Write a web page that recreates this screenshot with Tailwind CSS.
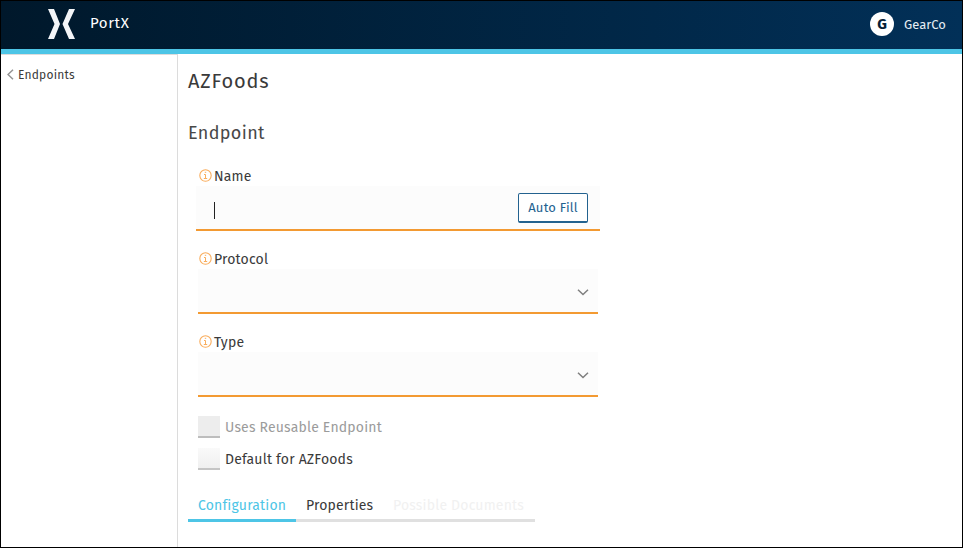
<!DOCTYPE html>
<html lang="en">
<head>
<meta charset="utf-8">
<title>PortX</title>
<script src="https://cdn.jsdelivr.net/npm/@tailwindcss/browser@4"></script>
</head>
<body class="h-[548px] w-[963px] overflow-hidden bg-white font-['Fira_Sans','Noto_Sans',sans-serif] text-sm text-[#3a3a3a]">
<div class="flex h-[548px] w-[963px] flex-col border border-black">
  <header class="flex h-[53px] shrink-0 items-start border-b-[5px] border-[#4dc5e6] bg-linear-to-r from-[#00182b] to-[#023058] text-white">
    <svg class="mt-2 ml-[46px] h-[30px] w-[28px]" viewBox="0 0 28 30" fill="#f3f5f8"><path d="M1 0h6l6 15-6 15H1l6.500-15zM28 0h-6l-6.500 15L22 30h6l-7-15z"/></svg>
    <span class="mt-3 ml-[15px] text-[15px] leading-5 tracking-[0.600px]">PortX</span>
    <span class="mt-[11px] ml-auto flex h-6 w-6 items-center justify-center rounded-full bg-white pt-px text-[15px] font-bold text-[#061f38]">G</span>
    <span class="mt-[14px] mr-4 ml-[10px] w-[42px] text-[13px] leading-5 whitespace-nowrap text-[#e5edf3]">GearCo</span>
  </header>
  <div class="flex min-h-0 flex-1">
    <aside class="w-[177px] shrink-0 border-t border-r border-[#dcdcdc] pt-[10px] pl-[6px]">
      <a class="flex h-5 items-center gap-1 text-[12px] tracking-[0.200px]"><svg class="-mt-px h-[11px] w-[7px]" viewBox="0 0 7 11" fill="none" stroke="#949494" stroke-width="1.500"><path d="M6 .7 1 5.500l5 4.800"/></svg><span class="pt-[2px]">Endpoints</span></a>
    </aside>
    <main class="flex-1 pl-[10px]">
      <h1 class="mt-[13px] h-7 text-[20px] leading-7 tracking-[0.800px]">AZFoods</h1>
      <h2 class="mt-[26px] h-6 text-[18px] leading-6 tracking-[0.350px] text-[#484848]">Endpoint</h2>
      <section class="ml-[10px] w-[400px] tracking-[0.180px]">
        <div class="mt-[21px] h-[64px]">
          <label class="flex h-5 items-center gap-[2px] pl-[1px]"><svg class="-mt-px h-[13px] w-[13px]" viewBox="0 0 13 13" fill="none" stroke="#f9ad5d"><circle cx="6.500" cy="6.500" r="5.700" stroke-width="1.100"/><path d="M5 5.500h1.500v4M4.800 9.500h3.400M5.800 3.300h1.400"/></svg><span class="pt-[2px]">Name</span></label>
          <div class="-mx-[2px] flex h-[45px] w-[404px] items-center border-b-2 border-[#f39a32] bg-[#fcfcfc]">
            <i class="mt-[5px] ml-[18px] h-[17px] w-px bg-[#222]"></i>
            <button class="mr-3 ml-auto h-[30px] w-[70px] rounded-xs border border-b-2 border-[#23628f] bg-white pt-[2px] text-[13px] tracking-[0.200px] whitespace-nowrap text-[#23628f]">Auto Fill</button>
          </div>
        </div>
        <div class="mt-[19px] h-[64px]">
          <label class="flex h-5 items-center gap-[2px] pl-[1px]"><svg class="-mt-px h-[13px] w-[13px]" viewBox="0 0 13 13" fill="none" stroke="#f9ad5d"><circle cx="6.500" cy="6.500" r="5.700" stroke-width="1.100"/><path d="M5 5.500h1.500v4M4.800 9.500h3.400M5.800 3.300h1.400"/></svg><span class="pt-[2px]">Protocol</span></label>
          <div class="flex h-[45px] items-center justify-end border-b-2 border-[#f39a32] bg-[#fcfcfc] pr-[9px]"><svg class="mt-[3px] h-[7px] w-[12px]" viewBox="0 0 12 7" fill="none" stroke="#7f7f7f" stroke-width="1.500"><path d="m1 .8 5 4.700L11 .8"/></svg></div>
        </div>
        <div class="mt-[19px] h-[64px]">
          <label class="flex h-5 items-center gap-[2px] pl-[1px]"><svg class="-mt-px h-[13px] w-[13px]" viewBox="0 0 13 13" fill="none" stroke="#f9ad5d"><circle cx="6.500" cy="6.500" r="5.700" stroke-width="1.100"/><path d="M5 5.500h1.500v4M4.800 9.500h3.400M5.800 3.300h1.400"/></svg><span class="pt-[2px]">Type</span></label>
          <div class="flex h-[45px] items-center justify-end border-b-2 border-[#f39a32] bg-[#fcfcfc] pr-[9px]"><svg class="mt-[3px] h-[7px] w-[12px]" viewBox="0 0 12 7" fill="none" stroke="#7f7f7f" stroke-width="1.500"><path d="m1 .8 5 4.700L11 .8"/></svg></div>
        </div>
        <label class="mt-5 flex h-[22px] items-center gap-[5px] text-[#9b9b9b]"><i class="h-[22px] w-[22px] border-b-2 border-[#bdbdbd] bg-[#ededed]"></i><span class="pt-[2px]">Uses Reusable Endpoint</span></label>
        <label class="mt-[10px] flex h-[22px] items-center gap-[5px]"><i class="h-[22px] w-[22px] border-b-2 border-[#c5c5c5] bg-linear-to-b from-[#fafafa] to-[#f0f0f0]"></i><span class="pt-[2px]">Default for AZFoods</span></label>
      </section>
      <nav class="mt-[23px] flex h-[29px] w-[347px] tracking-[0.180px] whitespace-nowrap">
        <a class="w-[108px] border-b-3 border-[#4dc5e6] pt-[3px] pl-[10px] text-[#4dc5e6]">Configuration</a>
        <a class="w-[87px] border-b-3 border-[#e0e0e0] pt-[3px] pl-[10px]">Properties</a>
        <a class="w-[152px] border-b-3 border-[#e0e0e0] pt-[3px] pl-[10px] text-[#f1f1f1]">Possible Documents</a>
      </nav>
    </main>
  </div>
</div>
</body>
</html>
